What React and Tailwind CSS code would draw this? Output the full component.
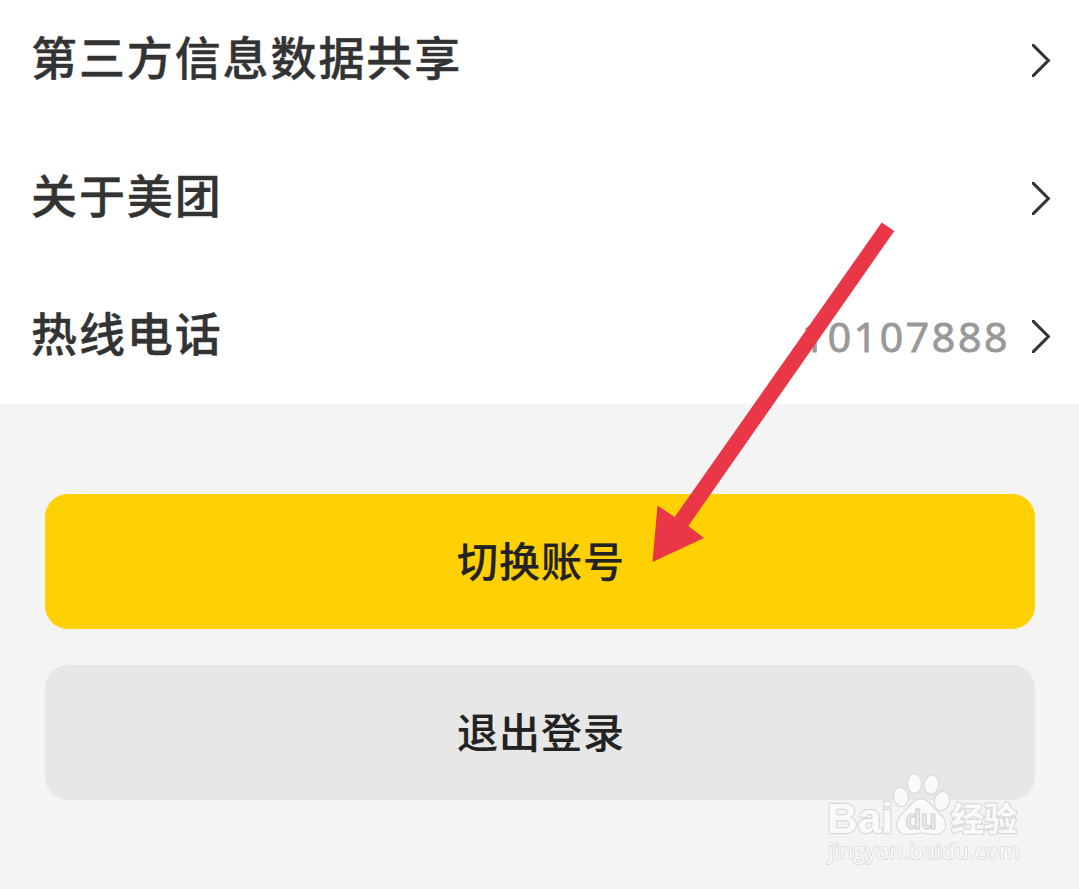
const rows = [
  { label: '第三方信息数据共享' },
  { label: '关于美团' },
  { label: '热线电话', value: '10107888' },
];

function Chevron() {
  return (
    <svg className="h-[33px] w-[19px] shrink-0" viewBox="0 0 19 33" fill="none">
      <path d="M-1 -1 L16.4 16.5 L-1 34" stroke="#333333" strokeWidth="3" />
    </svg>
  );
}

function SettingRow({ label, value }) {
  return (
    <div className="flex h-[138px] shrink-0 items-center justify-between pr-[28px] pl-[31px]">
      <span className="pb-[10px] text-[46px] leading-none font-medium tracking-[1.9px] text-[#333333] [-webkit-text-stroke:0.4px_#333333]">
        {label}
      </span>
      <div className="flex items-center gap-[22px]">
        {value && (
          <span className="pt-px font-['Open_Sans',sans-serif] text-[41px] leading-none font-medium tracking-[2.6px] text-[#999999] [-webkit-text-stroke:1px_#999999]">
            {value}
          </span>
        )}
        <Chevron />
      </div>
    </div>
  );
}

function Arrow() {
  return (
    <svg className="pointer-events-none absolute top-0 left-0 h-[889px] w-[1079px]" viewBox="0 0 1079 889">
      <polygon
        points="881.7,222.5 894.3,231 688.3,526 704,538 652.5,562 657.5,505.5 674.7,517"
        fill="#e93748"
      />
    </svg>
  );
}

function Watermark() {
  return (
    <svg
      className="pointer-events-none absolute top-[760px] left-[810px] h-[115px] w-[240px]"
      viewBox="0 0 240 115"
      fill="#fafafa"
      stroke="#d9d9d9"
      strokeWidth="1.2"
    >
      <g strokeWidth="2.4" paintOrder="stroke">
        <text x="17" y="73" className="font-['Liberation_Sans',sans-serif] text-[43px] font-bold" textLength="66" lengthAdjust="spacingAndGlyphs">
          Bai
        </text>
        <text x="141" y="71" className="font-['Noto_Sans_CJK_SC',sans-serif] text-[33px] font-bold" textLength="66" lengthAdjust="spacingAndGlyphs">
          经验
        </text>
        <text x="18" y="99" className="font-['Open_Sans',sans-serif] text-[22px] font-medium" strokeWidth="1.6" textLength="192" lengthAdjust="spacingAndGlyphs">
          jingyan.baidu.com
        </text>
      </g>
      {/* paw */}
      <ellipse cx="91" cy="37" rx="7.5" ry="9.7" transform="rotate(-12 91 37)" />
      <ellipse cx="104.5" cy="23.5" rx="7" ry="10" />
      <ellipse cx="121.5" cy="24.5" rx="7.2" ry="9.7" transform="rotate(10 121.5 24.5)" />
      <ellipse cx="132" cy="41" rx="7.5" ry="9.7" transform="rotate(14 132 41)" />
      <path d="M111 39 C119 39 122 47 129 53 C138 60 138 71 129 74 C123 76 118 73 111 73 C104 73 99 76 93 74 C85 71 85 60 93 53 C99 47 103 39 111 39Z" />
      <text x="95.5" y="69" className="font-['Liberation_Sans',sans-serif] text-[27px] font-bold" fill="#ededed" stroke="#cccccc" strokeWidth="1" textLength="31" lengthAdjust="spacingAndGlyphs">
        du
      </text>
    </svg>
  );
}

export default function App() {
  return (
    <div className="relative h-[889px] w-[1079px] overflow-hidden bg-[#f4f4f4] font-['Noto_Sans_CJK_SC',sans-serif]">
      <div className="flex h-[404px] flex-col bg-white">
        <div className="-mt-[9px] flex flex-col">
          {rows.map((row) => (
            <SettingRow key={row.label} label={row.label} value={row.value} />
          ))}
        </div>
      </div>

      <div className="flex flex-col gap-[36px] pt-[90px] pr-[44px] pl-[45px] text-[41px] leading-none font-medium tracking-[1px] text-[#222222] [-webkit-text-stroke:0.2px_#222222]">
        <button className="h-[135px] rounded-[23px] bg-[#ffd003] pb-[5px] pl-[2px]">切换账号</button>
        <button className="h-[135px] rounded-[23px] bg-[#e7e7e7] pb-[5px] pl-[2px]">退出登录</button>
      </div>

      <Arrow />
      <Watermark />
    </div>
  );
}
